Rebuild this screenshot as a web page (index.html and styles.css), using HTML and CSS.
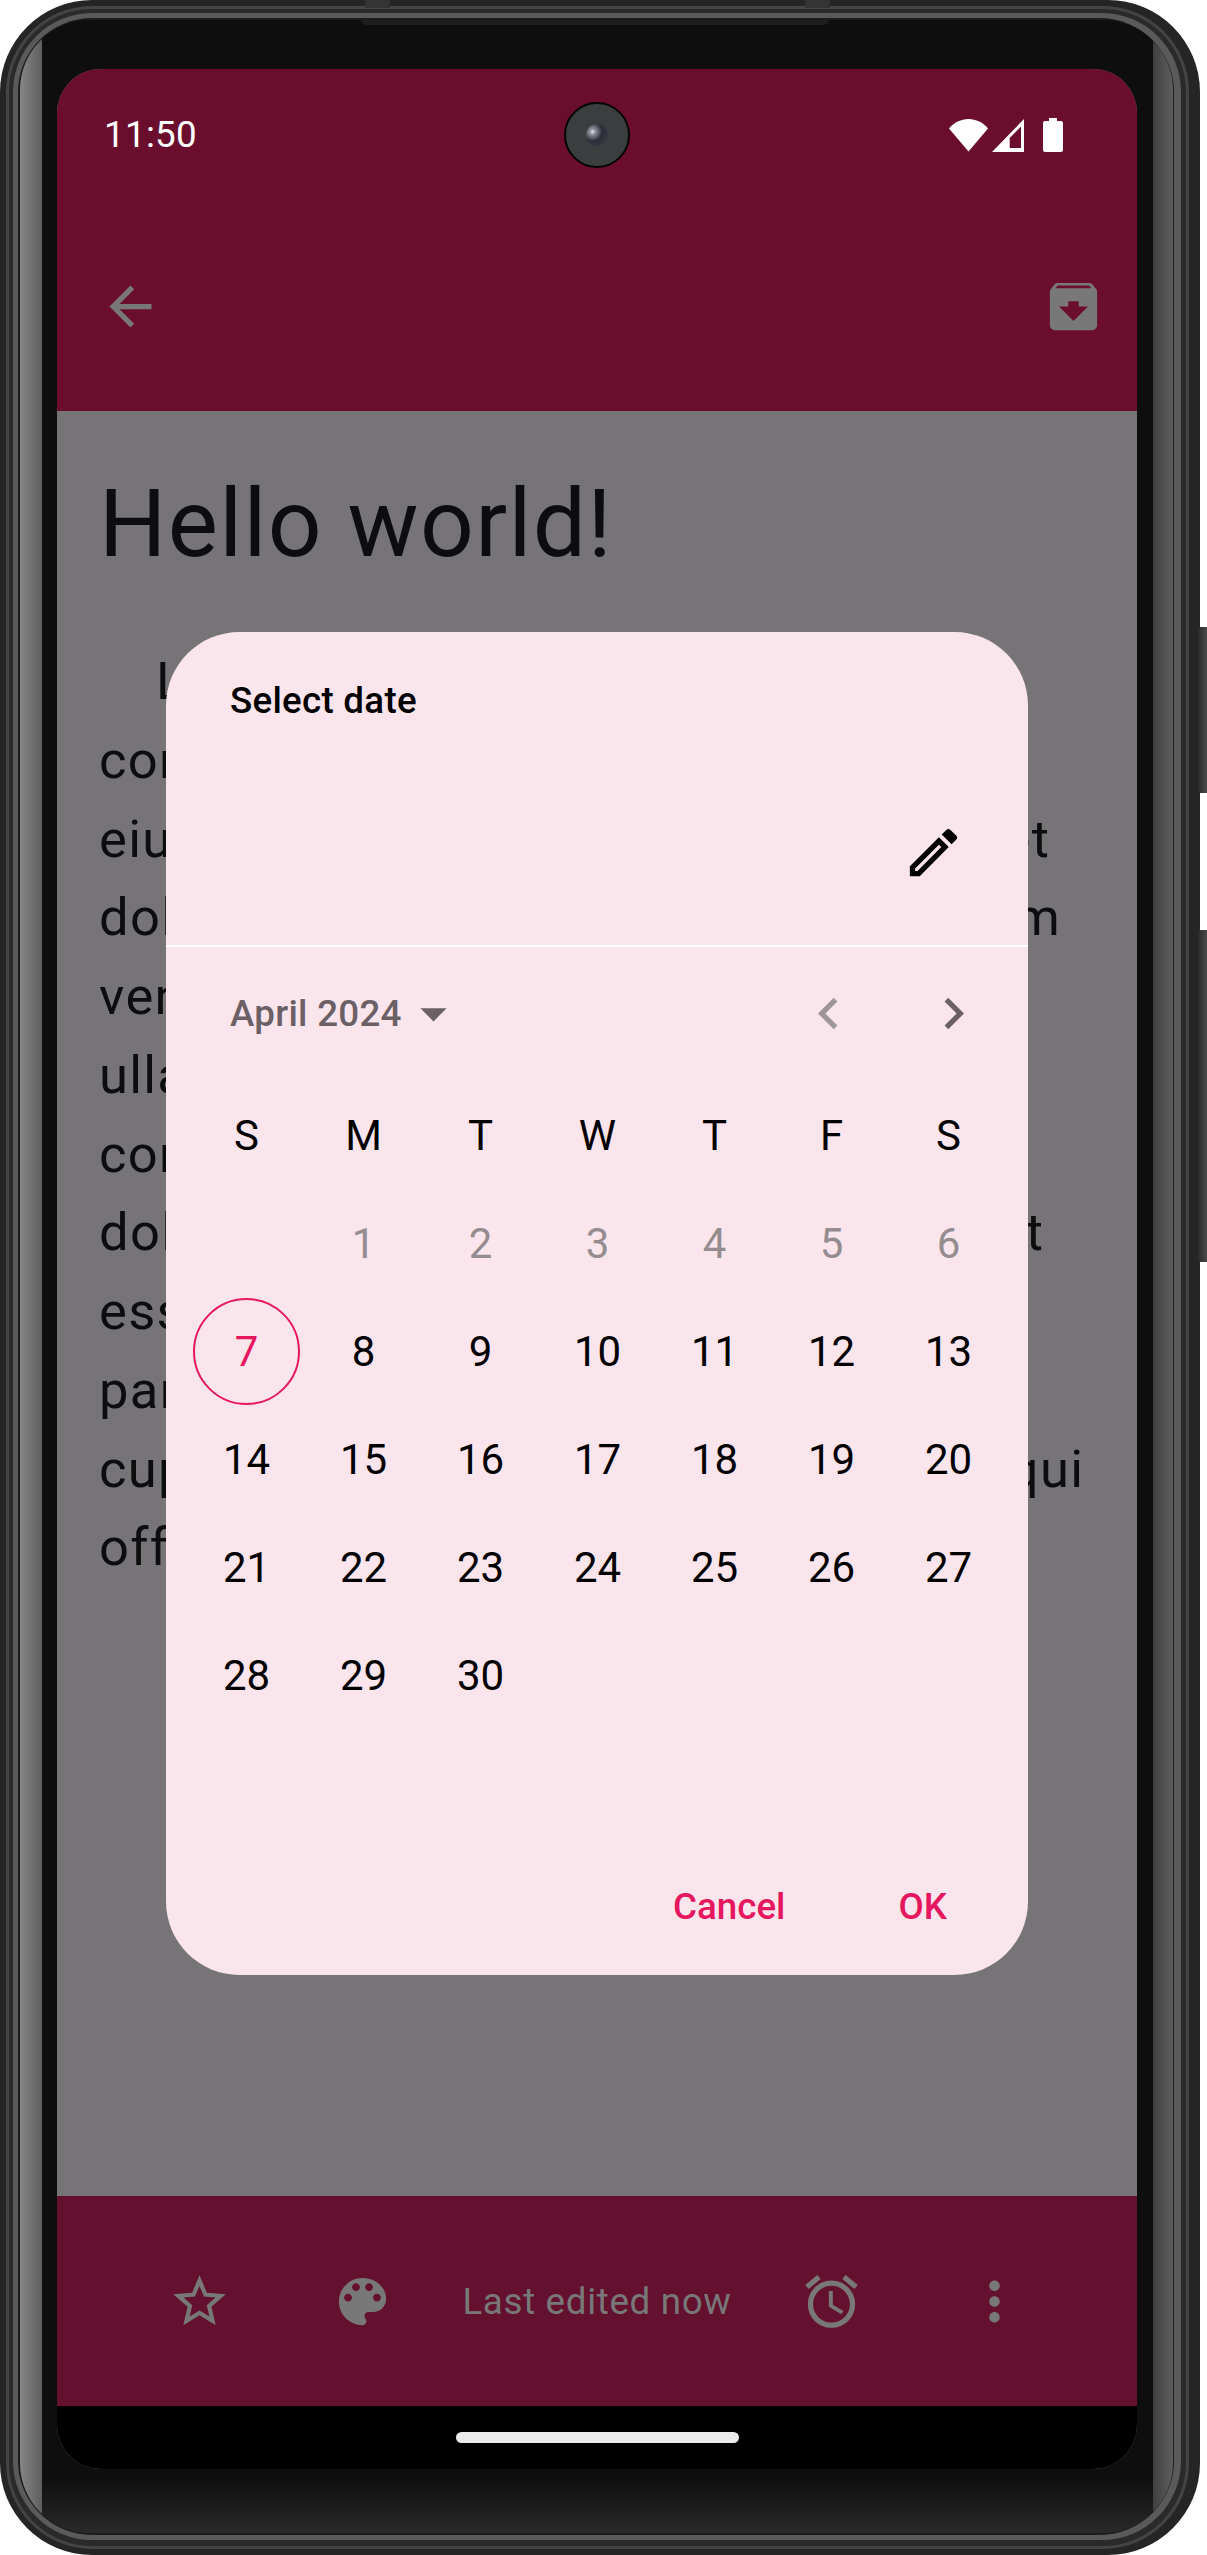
FILE: index.html
```html
<!DOCTYPE html>
<html lang="en">
<head>
<meta charset="utf-8">
<title>Select date</title>
<link rel="stylesheet" href="styles.css">
</head>
<body>
<div class="device">
  <span class="side-key side-key-power"></span>
  <span class="side-key side-key-volume"></span>
  <span class="top-tab top-tab-left"></span>
  <span class="top-tab top-tab-right"></span>
  <div class="rim-a"><div class="rim-b"><div class="rim-c"><div class="rim-d">
    <div class="bezel">
      <span class="speaker"></span>
      <div class="screen">
        <header class="top-area">
          <div class="status-bar">
            <span class="clock">11:50</span>
            <div class="status-icons">
              <svg class="st-wifi" viewBox="0 0 39 33"><path d="M0 9.5C5 3.5 12 0 19.5 0S34 3.5 39 9.5L19.5 32.5Z"/></svg>
              <svg class="st-signal" viewBox="0 0 32 33"><path fill-rule="evenodd" d="M0 33 32 0V33ZM29 7.5 17.7 19V29H29Z"/></svg>
              <svg class="st-battery" viewBox="0 0 20 34"><path d="M6 0H14V3H18C19.1 3 20 3.9 20 5V32C20 33.1 19.1 34 18 34H2C.9 34 0 33.1 0 32V5C0 3.9.9 3 2 3H6Z"/></svg>
            </div>
            <span class="camera"><span class="lens"></span></span>
          </div>
          <div class="toolbar">
            <svg class="icon" viewBox="0 0 24 24"><path d="M20 11H7.83l5.59-5.59L12 4l-8 8 8 8 1.41-1.41L7.83 13H20v-2z"/></svg>
            <svg class="icon" viewBox="0 0 24 24"><path d="M20.54 5.23l-1.39-1.68C18.88 3.21 18.47 3 18 3H6c-.47 0-.88.21-1.16.55L3.46 5.23C3.17 5.57 3 6.02 3 6.5V19c0 1.1.9 2 2 2h14c1.1 0 2-.9 2-2V6.5c0-.48-.17-.93-.46-1.27zM12 17.5L6.5 12H10v-2h4v2h3.5L12 17.5zM5.12 5l.81-1h12l.94 1H5.12z"/></svg>
          </div>
        </header>

        <main class="content">
          <h1 class="note-title">Hello world!</h1>
          <p class="note-body">Lorem ipsum dolor sit amet,<br>consectetur adipiscing elit, sed do<br>eiusmod tempor incididunt ut labore et<br>dolore magna aliqua. Ut enim ad minim<br>veniam, quis nostrud exercitation<br>ullamco laboris nisi ut aliquip ex ea<br>commodo consequat. Duis aute irure<br>dolor in reprehenderit in voluptate velit<br>esse cillum dolore eu fugiat nulla<br>pariatur. Excepteur sint occaecat<br>cupidatat non proident, sunt in culpa qui<br>officia deserunt mollit anim id est</p>

          <div class="overlay">
            <section class="dialog">
              <div class="dialog-head">
                <h2 class="dialog-title">Select date</h2>
                <svg class="icon icon-edit" viewBox="0 0 24 24"><path d="M14.06 9.02l.92.92L5.92 19H5v-.92l9.06-9.06M17.66 3c-.25 0-.51.1-.7.29l-1.83 1.83 3.75 3.75 1.83-1.83c.39-.39.39-1.02 0-1.41l-2.34-2.34c-.2-.2-.45-.29-.71-.29zm-3.6 3.19L3 17.25V21h3.75L17.81 9.94l-3.75-3.75z"/></svg>
              </div>
              <div class="month-row">
                <span class="month-label">April 2024</span>
                <svg class="icon icon-month" viewBox="0 0 24 24"><path d="M7 10l5 5 5-5z"/></svg>
                <div class="month-nav">
                  <svg class="icon icon-prev" viewBox="0 0 24 24"><path d="M15.41 7.41L14 6l-6 6 6 6 1.41-1.41L10.83 12z"/></svg>
                  <svg class="icon icon-month" viewBox="0 0 24 24"><path d="M10 6L8.59 7.41 13.17 12l-4.58 4.59L10 18l6-6z"/></svg>
                </div>
              </div>
              <div class="calendar">
                <span>S</span><span>M</span><span>T</span><span>W</span><span>T</span><span>F</span><span>S</span>
                <span></span><span class="off">1</span><span class="off">2</span><span class="off">3</span><span class="off">4</span><span class="off">5</span><span class="off">6</span>
                <span><b class="today">7</b></span><span>8</span><span>9</span><span>10</span><span>11</span><span>12</span><span>13</span>
                <span>14</span><span>15</span><span>16</span><span>17</span><span>18</span><span>19</span><span>20</span>
                <span>21</span><span>22</span><span>23</span><span>24</span><span>25</span><span>26</span><span>27</span>
                <span>28</span><span>29</span><span>30</span>
              </div>
              <div class="dialog-actions">
                <span>Cancel</span>
                <span>OK</span>
              </div>
            </section>
          </div>
        </main>

        <footer class="bottom-bar">
          <div class="bar-group">
            <svg class="icon" viewBox="0 0 24 24"><path d="M22 9.24l-7.19-.62L12 2 9.19 8.63 2 9.24l5.46 4.73L5.82 21 12 17.27 18.18 21l-1.63-7.03L22 9.24zM12 15.4l-3.76 2.27 1-4.28-3.32-2.88 4.38-.38L12 6.1l1.71 4.04 4.38.38-3.32 2.88 1 4.28L12 15.4z"/></svg>
            <svg class="icon" viewBox="0 0 24 24"><path d="M12 3c-4.97 0-9 4.03-9 9s4.03 9 9 9c.83 0 1.5-.67 1.5-1.5 0-.39-.15-.74-.39-1.01-.23-.26-.38-.61-.38-.99 0-.83.67-1.5 1.5-1.5H16c2.76 0 5-2.24 5-5 0-4.42-4.03-8-9-8zm-5.5 9c-.83 0-1.5-.67-1.5-1.5S5.67 9 6.5 9 8 9.67 8 10.5 7.33 12 6.5 12zm3-4C8.67 8 8 7.33 8 6.5S8.67 5 9.5 5s1.5.67 1.5 1.5S10.33 8 9.5 8zm5 0c-.83 0-1.5-.67-1.5-1.5S13.67 5 14.5 5s1.5.67 1.5 1.5S15.33 8 14.5 8zm3 4c-.83 0-1.5-.67-1.5-1.5S16.67 9 17.5 9s1.5.67 1.5 1.5-.67 1.5-1.5 1.5z"/></svg>
          </div>
          <span class="edited">Last edited now</span>
          <div class="bar-group">
            <svg class="icon" viewBox="0 0 24 24"><path d="M22 5.72l-4.6-3.86-1.29 1.53 4.6 3.86L22 5.72zM7.88 3.39L6.6 1.86 2 5.71l1.29 1.53 4.59-3.85zM12.5 8H11v6l4.75 2.85.75-1.23-4-2.37V8zM12 4c-4.97 0-9 4.03-9 9s4.03 9 9 9 9-4.03 9-9-4.03-9-9-9zm0 16c-3.87 0-7-3.13-7-7s3.13-7 7-7 7 3.13 7 7-3.13 7-7 7z"/></svg>
            <svg class="icon" viewBox="0 0 24 24"><path d="M12 8c1.1 0 2-.9 2-2s-.9-2-2-2-2 .9-2 2 .9 2 2 2zm0 2c-1.1 0-2 .9-2 2s.9 2 2 2 2-.9 2-2-.9-2-2-2zm0 6c-1.1 0-2 .9-2 2s.9 2 2 2 2-.9 2-2-.9-2-2-2z"/></svg>
          </div>
        </footer>

        <nav class="nav-area"><span class="home-pill"></span></nav>
      </div>
    </div>
  </div></div></div></div>
</div>
</body>
</html>
```
FILE: styles.css
```css
* { box-sizing: border-box; }
html, body { margin: 0; background: #fff; }
body { width: 1207px; height: 2555px; overflow: hidden; font-family: "Roboto", "Liberation Sans", sans-serif; }
h1, h2, p { margin: 0; font-weight: 400; }

/* device shell */
.device {
  position: relative;
  width: 1200px;
  height: 2555px;
  padding: 6px 11px 6px 6px;
  border-radius: 92px;
  background: #252525;
}
.rim-a { height: 100%; padding: 3px; border-radius: 86px; background: #444; }
.rim-b { height: 100%; padding: 4px 5px 6px 4px; border-radius: 83px; background: #2a2a2a; }
.rim-c { height: 100%; padding: 5px 7px 5px 5px; border-radius: 79px; background: #5a5a5a; }
.rim-d { height: 100%; padding: 2px 1px 2px 2px; border-radius: 74px; background: #1c1c1c; }
.bezel {
  position: relative;
  height: 100%;
  padding: 49px 36px 0 37px;
  border-radius: 70px;
  background:
    linear-gradient(to right, #868686, #5f5f5f) left top / 22px 100% no-repeat,
    linear-gradient(to right, #404040, #5e5e5e) right top / 20px 100% no-repeat,
    linear-gradient(to top, #2a2a2a, #0e0e0e 55px);
}
.side-key { position: absolute; left: 1198px; width: 9px; background: linear-gradient(to right, #2a2a2a, #4a4a4a); }
.side-key-power { top: 627px; height: 166px; }
.side-key-volume { top: 930px; height: 332px; }
.top-tab { position: absolute; top: 0; width: 25px; height: 8px; background: #343434; }
.top-tab-left { left: 365px; }
.top-tab-right { left: 805px; }
.speaker {
  position: absolute;
  top: 0;
  left: 341px;
  width: 468px;
  height: 5px;
  border-radius: 0 0 6px 6px;
  background: #1e1e1e;
}

/* screen */
.screen {
  display: flex;
  flex-direction: column;
  height: 2400px;
  overflow: hidden;
  border-radius: 44px;
  background: #767477;
}
.top-area { height: 342px; background: #6b0e2e; }
.status-bar {
  position: relative;
  display: flex;
  justify-content: space-between;
  align-items: center;
  height: 132px;
  padding: 0 74px 0 47px;
}
.clock { font-size: 36.75px; line-height: 44px; letter-spacing: .3px; color: #fff; }
.status-icons { display: flex; align-items: center; fill: #fff; }
.st-wifi { width: 39px; height: 33px; margin-right: 4px; }
.st-signal { width: 32px; height: 33px; margin-right: 19px; }
.st-battery { width: 20px; height: 34px; }
.camera {
  position: absolute;
  left: 507px;
  top: 33px;
  display: flex;
  justify-content: center;
  align-items: center;
  width: 66px;
  height: 66px;
  border: 2.5px solid #050505;
  border-radius: 50%;
  background: #3b3e3f;
}
.lens {
  width: 22px;
  height: 22px;
  border-radius: 50%;
  background: radial-gradient(circle at 30% 35%, #e8e8f0 0, #8f8f9c 14%, #2c2e38 45%, #3e4048 100%);
}
.toolbar {
  display: flex;
  justify-content: space-between;
  align-items: center;
  height: 210px;
  padding: 0 32px 0 42px;
}

.icon { display: block; flex: none; width: 63px; height: 63px; fill: #787878; }

/* note */
.content { position: relative; flex: 1; padding: 57px 0 0 42px; overflow: hidden; background: #767477; color: #0d0d0f; }
.note-title { font-size: 94.5px; line-height: 112px; letter-spacing: 1.3px; }
.note-body { margin-top: 62px; font-size: 52.5px; line-height: 78.75px; letter-spacing: 1.3px; text-indent: 57px; white-space: nowrap; }

/* dialog */
.overlay { position: absolute; inset: 0; display: flex; justify-content: center; align-items: center; }
.dialog { width: 862px; height: 1343px; border-radius: 73.5px; background: #fbe5ed; color: #000; }
.dialog-head {
  display: flex;
  flex-direction: column;
  height: 314.5px;
  padding: 43px 63px 0 64px;
  border-bottom: 2.6px solid #fff;
}
.dialog-title { font-size: 36.75px; line-height: 52px; font-weight: 500; letter-spacing: .26px; }
.icon-edit { align-self: flex-end; margin-top: 94px; fill: #000; }
.month-row { display: flex; align-items: center; height: 134.5px; padding: 0 43px 0 64px; color: #6b6065; }
.month-label { font-size: 36.75px; line-height: 52px; font-weight: 500; letter-spacing: .26px; }
.icon-month { fill: #6b6065; }
.month-nav { display: flex; gap: 62.5px; margin-left: auto; }
.icon-prev { fill: #9e9599; }
.calendar {
  display: grid;
  grid-template-columns: repeat(7, 117px);
  grid-auto-rows: 108px;
  height: 756px;
  padding: 0 21px 0 22px;
  font-size: 42px;
}
.calendar span { display: flex; justify-content: center; align-items: center; }
.calendar .off { color: #958c90; }
.today {
  display: flex;
  justify-content: center;
  align-items: center;
  width: 107px;
  height: 107px;
  border: 2.8px solid #e6175f;
  border-radius: 50%;
  font-weight: 400;
  color: #e6175f;
}
.dialog-actions {
  display: flex;
  justify-content: flex-end;
  align-items: center;
  gap: 113px;
  height: 138px;
  padding-right: 81px;
  font-size: 36.75px;
  font-weight: 500;
  color: #e6175f;
}

/* bottom */
.bottom-bar {
  display: flex;
  justify-content: space-between;
  align-items: center;
  height: 210px;
  padding: 0 111px;
  background: #64102f;
}
.bar-group { display: flex; gap: 99.5px; }
.edited { font-size: 36.75px; letter-spacing: .66px; color: #787878; }
.nav-area { display: flex; justify-content: center; height: 63px; padding-top: 26px; background: #000; }
.home-pill { width: 283px; height: 11px; border-radius: 6px; background: #ececec; }
```
